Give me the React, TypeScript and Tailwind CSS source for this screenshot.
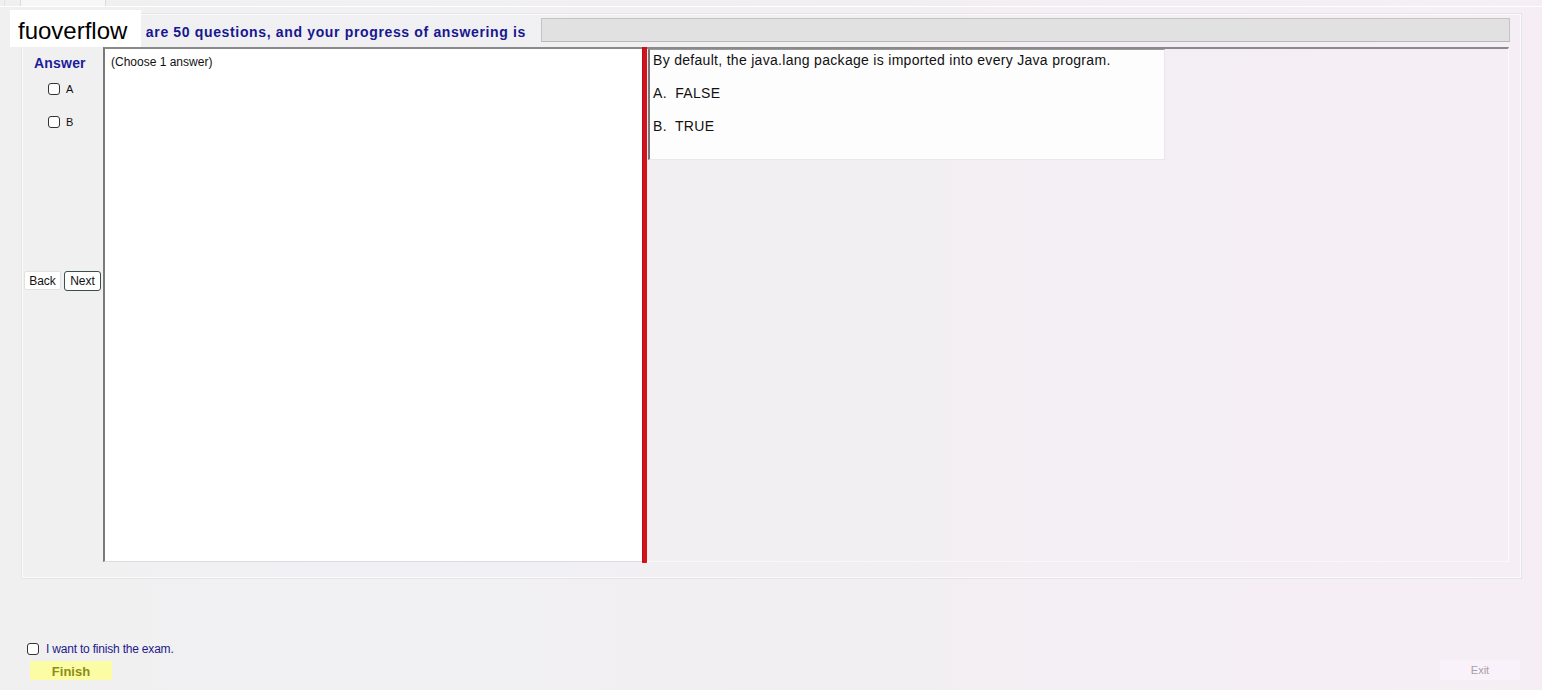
import React from "react";

function Box() {
  return <span className="inline-block w-[12px] h-[12px] rounded-[3px] border border-[#333] bg-white" />;
}

export default function App() {
  return (
    <div
      className="relative w-[1542px] h-[690px] overflow-hidden flex flex-col bg-gradient-to-r from-[#f0f0f1] via-[#f1eff2] to-[#f6eef5]"
      style={{ fontFamily: '"Liberation Sans", Arial, sans-serif' }}
    >
      {/* top tab strip */}
      <div className="h-[7px] flex border-b border-white">
        <div className="ml-[4px] w-[16px] border-l border-[#e3e3e3]" />
        <div className="w-[86px] bg-[#f7f7f7] border-x border-[#dcdcdc]" />
        <div className="flex-1" />
      </div>

      {/* main group panel */}
      <div className="ml-[22px] mr-[21px] mt-[7px] h-[564px] border border-[#fbfbfb] shadow-[0_0_0_1px_#e6e4e8] flex flex-col">
        {/* header row */}
        <div className="h-[32px] flex pt-[2px]">
          <div className="w-[518px] flex items-center justify-end pr-[15px] pt-[1px]">
            <span className="text-[14px] tracking-[0.65px] font-bold text-[#171790] whitespace-nowrap">
              are 50 questions, and your progress of answering is
            </span>
          </div>
          <div className="w-[969px] h-[24px] mt-[1px] bg-[#e2e1e2] border border-[#c4c4c4] border-b-[#b8b8b8]" />
        </div>

        {/* content row */}
        <div className="flex h-[516px]">
          {/* answer column */}
          <div className="w-[80px] flex flex-col">
            <div className="pl-[11px] pt-[7px] text-[14px] leading-[18px] tracking-[0.2px] font-bold text-[#1c1c9c]">Answer</div>
            <div className="pl-[25px] mt-[9px] flex items-center gap-[6px] text-[11px] text-[#111]">
              <Box /> <span>A</span>
            </div>
            <div className="pl-[25px] mt-[16px] flex items-center gap-[6px] text-[11px] text-[#111]">
              <Box /> <span>B</span>
            </div>
            <div className="mt-[141px] pl-[1px] flex gap-[3px]">
              <button className="w-[37px] h-[19px] bg-white border border-[#e2e2e2] rounded-[2px] text-[12px] text-[#111] leading-none">
                Back
              </button>
              <button className="w-[37px] h-[20px] bg-white border border-[#3e4e4e] rounded-[3px] text-[12px] text-[#111] leading-none">
                Next
              </button>
            </div>
          </div>

          {/* question panel left */}
          <div className="w-[539px] h-[515px] bg-white border-l-2 border-t-2 border-l-[#7a7a7a] border-t-[#8a8a8a] border-b border-b-[#dcdce4]">
            <div className="pl-[6px] pt-[4px] text-[12px] text-[#111]">(Choose 1 answer)</div>
          </div>

          {/* red splitter */}
          <div className="w-[5px] h-[516px] bg-[#d5121c] rounded-b-[1px] border-l border-[#b40e16]" />

          {/* right panel */}
          <div className="flex-1 h-[515px] border-t-2 border-[#8a8a8a] border-r border-r-[#fbfbfb] border-b border-b-[#f8f8f8] pl-[1px]">
            <div className="w-[517px] h-[111px] bg-[#fefdfe] border-l-2 border-t border-l-[#777] border-t-[#9a9a9a] border-r border-r-[#ebe6eb] border-b border-b-[#ebe6eb] pl-[3px] text-[14px] leading-[16px] tracking-[0.3px] text-[#111]">
              <div className="pt-[2px]">By default, the java.lang package is imported into every Java program.</div>
              <div className="mt-[17px]">A.&nbsp; FALSE</div>
              <div className="mt-[17px]">B.&nbsp; TRUE</div>
            </div>
          </div>
          <div className="w-[11px]" />
        </div>
      </div>

      {/* bottom area */}
      <div className="mt-[62px] pl-[27px] flex items-center gap-[7px] text-[12px] text-[#1f1a8a] tracking-[-0.2px]">
        <Box />
        <span>I want to finish the exam.</span>
      </div>
      <div className="mt-[3px] flex items-start px-[30px] pr-[22px]">
        <button className="w-[82px] h-[19px] bg-[#fbfca4] text-[13px] font-bold text-[#8c8c1a] leading-none pt-[2px]">
          Finish
        </button>
        <div className="flex-1" />
        <button className="w-[80px] h-[20px] -mt-[1px] bg-[#faf2fa] text-[11px] text-[#a6a0a6] leading-none">
          Exit
        </button>
      </div>

      {/* watermark */}
      <div className="absolute left-[10px] top-[10px] w-[131px] h-[37px] bg-white flex items-center pl-[8px] pt-[4px] text-[24px] text-black">
        fuoverflow
      </div>
    </div>
  );
}
